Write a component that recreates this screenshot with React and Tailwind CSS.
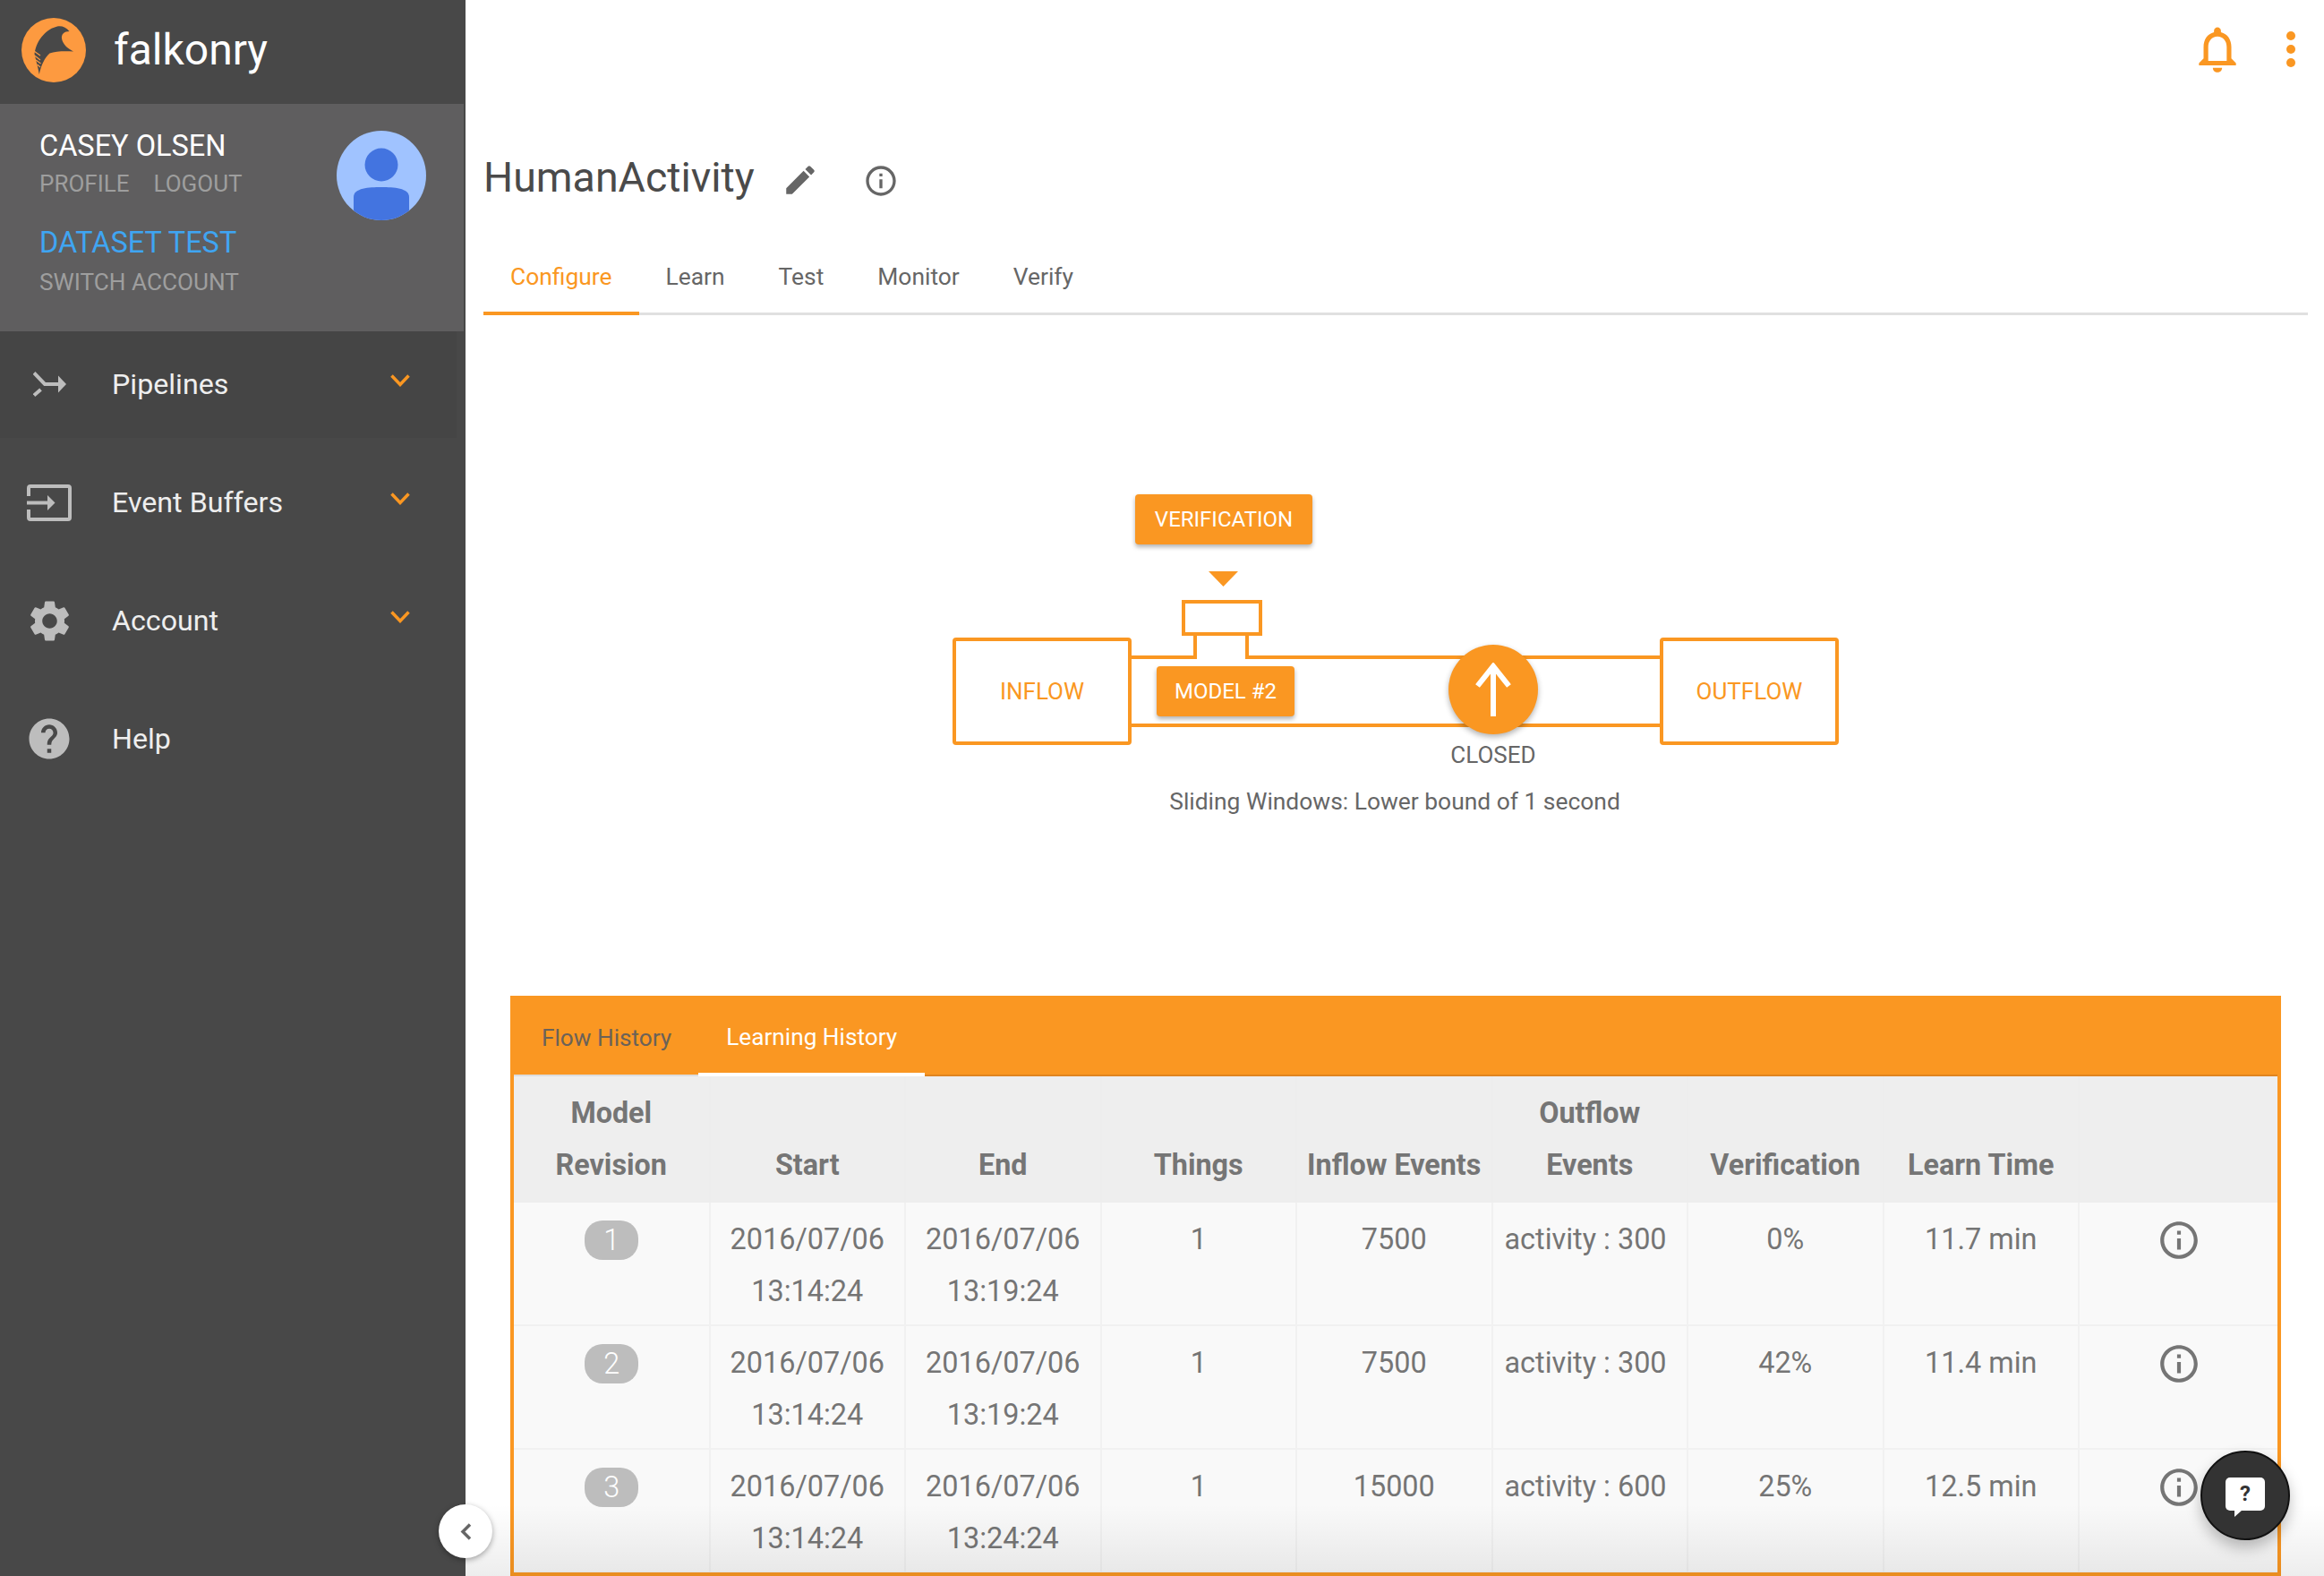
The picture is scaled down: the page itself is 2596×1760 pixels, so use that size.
import { MdEdit, MdHelp, MdInfoOutline, MdNotificationsNone, MdSettings } from "react-icons/md";

const navItems = [
  { label: "Pipelines", icon: PipelinesIcon, arrow: true, active: true },
  { label: "Event Buffers", icon: BufferIcon, arrow: true },
  { label: "Account", icon: () => <MdSettings size={55} />, arrow: true },
  { label: "Help", icon: () => <MdHelp size={54} /> }
];

const tabs = ["Configure", "Learn", "Test", "Monitor", "Verify"];

const rows = [
  { id: 1, start: "13:14:24", end: "13:19:24", inflow: "7500", outflow: "activity : 300", verify: "0%", time: "11.7 min" },
  { id: 2, start: "13:14:24", end: "13:19:24", inflow: "7500", outflow: "activity : 300", verify: "42%", time: "11.4 min" },
  { id: 3, start: "13:14:24", end: "13:24:24", inflow: "15000", outflow: "activity : 600", verify: "25%", time: "12.5 min" }
];

function PipelinesIcon() {
  return (
    <svg width="37" height="28" viewBox="0 0 37 28" fill="none" stroke="currentColor" strokeWidth="4">
      <path d="M1 1.5 L13 14 H29" />
      <path d="M1 26.5 L8.5 20" />
      <path d="M28 4.5 L37 14 L28 23.5 Z" fill="currentColor" stroke="none" />
    </svg>
  );
}

function BufferIcon() {
  return (
    <svg width="50" height="41" viewBox="0 0 50 41" fill="none" stroke="currentColor" strokeWidth="4">
      <path d="M2 13 V4 a2 2 0 0 1 2 -2 H46 a2 2 0 0 1 2 2 V37 a2 2 0 0 1 -2 2 H4 a2 2 0 0 1 -2 -2 V28" />
      <path d="M0 20.5 H24" />
      <path d="M23 12 L31.5 20.5 L23 29 Z" fill="currentColor" stroke="none" />
    </svg>
  );
}

function Logo() {
  return (
    <svg width="72" height="72" viewBox="0 0 72 72" className="shrink-0">
      <circle cx="36" cy="36" r="36" fill="#fd9a40" />
      <path
        d="M40 9.5 C45 8.5 50 10.5 53.5 15 C47.5 15 44.5 18 45 23 C46 29 51 34 58 37.5 C49 37 38 37 31.5 39.5 C26 44 22 53 19.8 63 C18.5 55 16 47 14.5 40 C16 31 19 25 24 19.5 C29 14 34 11 40 9.5 Z"
        fill="#484848"
      />
      <path d="M14 37 L21 42 M14.5 42 L21 47 M16 47 L21.5 51 M17.5 52 L21 55" stroke="#fd9a40" strokeWidth="1.2" />
    </svg>
  );
}

function Avatar() {
  return (
    <svg width="100" height="100" viewBox="0 0 100 100" className="shrink-0">
      <defs>
        <clipPath id="avatar-clip">
          <circle cx="50" cy="50" r="50" />
        </clipPath>
      </defs>
      <g clipPath="url(#avatar-clip)">
        <rect width="100" height="100" fill="#a0c3ff" />
        <circle cx="50" cy="38" r="18.5" fill="#4374e0" />
        <path d="M19 100 V74 C19 64 36 63 50 63 C64 63 81 64 81 74 V100 Z" fill="#4374e0" />
      </g>
    </svg>
  );
}

function Sidebar() {
  return (
    <aside className="w-[520px] shrink-0 bg-[#484848]">
      <div className="flex h-[116px] items-center pb-[4px] pl-[24px]">
        <Logo />
        <span className="ml-[31px] text-[48px] leading-none text-white">falkonry</span>
      </div>
      <div className="flex h-[254px] w-[518px] justify-between bg-[#5f5e5f] pl-[44px] pr-[42px] pt-[27px]">
        <div>
          <p className="h-[40px] text-[32.5px] leading-[40px] text-white">CASEY OLSEN</p>
          <p className="mt-[2px] flex h-[40px] gap-[27px] text-[26px] leading-[40px] text-[#9e9e9e]">
            <span>PROFILE</span>
            <span>LOGOUT</span>
          </p>
          <p className="mt-[26px] h-[40px] text-[32.5px] leading-[40px] text-[#3fa5f2]">DATASET TEST</p>
          <p className="mt-[4px] h-[40px] text-[26.2px] leading-[40px] text-[#9e9e9e]">SWITCH ACCOUNT</p>
        </div>
        <div className="pt-[3px]">
          <Avatar />
        </div>
      </div>
      <nav>
        {navItems.map((item) => (
          <div
            key={item.label}
            className={`flex w-[510px] items-center ${item.active ? "mb-[6px] h-[119px] bg-[#454545] pb-[1px]" : "h-[132px]"}`}
          >
            <span className="flex w-[110px] shrink-0 items-center justify-center text-[#bdbdbd]">
              <item.icon />
            </span>
            <span className="ml-[15px] flex-1 text-[32.2px] leading-none text-[#eeeeee]">{item.label}</span>
            {item.arrow && (
              <svg width="22" height="14" viewBox="0 0 22 14" fill="none" stroke="#fa9722" strokeWidth="3.5" className="mb-[8px] mr-[52px]">
                <path d="M1.5 1.5 L11 11.5 L20.5 1.5" />
              </svg>
            )}
          </div>
        ))}
      </nav>
    </aside>
  );
}

function Diagram() {
  const btn = "absolute flex items-center justify-center rounded-[4px] bg-[#fa9722] text-[24px] text-white shadow-[0_3px_5px_rgba(0,0,0,0.3)]";
  const node = "absolute top-[360px] flex h-[120px] w-[200px] items-center justify-center rounded-[4px] border-4 border-[#fa9722] bg-white text-[26px] text-[#fa9722]";
  return (
    <div className="relative h-[760px]">
      <div className={`${btn} left-[728px] top-[200px] h-[56px] w-[198px]`}>VERIFICATION</div>
      <svg width="33" height="17" viewBox="0 0 33 17" className="absolute left-[810px] top-[286px]">
        <path d="M0 0 H33 L16.5 17 Z" fill="#fa9722" />
      </svg>
      <div className="absolute left-[780px] top-[318px] h-[40px] w-[90px] border-4 border-[#fa9722]" />
      <svg width="590" height="112" viewBox="0 0 590 112" fill="none" stroke="#fa9722" strokeWidth="4" className="absolute left-[724px] top-[350px]">
        <path d="M0 32 H71 V8 M129 8 V32 H590 M0 108 H590" />
      </svg>
      <div className={`${node} left-[524px]`}>INFLOW</div>
      <div className={`${node} left-[1314px]`}>OUTFLOW</div>
      <div className={`${btn} left-[752px] top-[392px] h-[56px] w-[154px]`}>MODEL #2</div>
      <div className="absolute left-[1078px] top-[368px] flex h-[100px] w-[100px] items-center justify-center rounded-full bg-[#fa9722] shadow-[0_3px_6px_rgba(0,0,0,0.3)]">
        <svg width="40" height="60" viewBox="0 0 40 60" fill="none" stroke="#ffffff" strokeWidth="6">
          <path d="M20 60 V4 M2.5 26 L20 4 L37.5 26" />
        </svg>
      </div>
      <div className="absolute left-[1028px] top-[471px] w-[200px] text-center text-[26px] leading-[40px] text-[#666666]">CLOSED</div>
      <div className="absolute left-[518px] top-[523px] w-[1000px] text-center text-[26.4px] leading-[40px] text-[#666666]">Sliding Windows: Lower bound of 1 second</div>
    </div>
  );
}

function HistoryTable() {
  const th = "border-x-2 border-[#ededed] px-[8px] pb-[13px] pt-[12px] align-bottom text-[32.3px] font-bold leading-[58px] text-[#757575] first:border-l-0 last:border-r-0";
  const td = "border-x-2 border-b-2 border-[#f1f1f1] px-[8px] pb-[8px] pt-[12px] align-top text-[32.4px] leading-[58px] text-[#757575] first:border-l-0 last:border-r-0";
  return (
    <section className="mx-[30px] h-[648px] overflow-hidden border-x-4 border-b-4 border-[#fa9722]">
      <div className="-mx-[4px] flex h-[90px] items-stretch border-b-2 border-[#e08420] bg-[#fa9722] pl-[4px] text-[26.2px]">
        <div className="-mb-[2px] flex items-center border-b-2 border-[#dddddd] pl-[31px] pr-[30px] pt-[8px] text-[#6b6258]">Flow History</div>
        <div className="-mb-[2px] flex items-center border-b-4 border-white px-[31px] pt-[8px] text-white">Learning History</div>
      </div>
      <table className="w-full table-fixed border-collapse bg-[#f9f9f9]">
        <colgroup>
          <col className="w-[218.5px]" />
          <col className="w-[218.5px]" />
          <col className="w-[218.5px]" />
          <col className="w-[218.5px]" />
          <col className="w-[218.5px]" />
          <col className="w-[218.5px]" />
          <col className="w-[218.5px]" />
          <col className="w-[218.5px]" />
          <col />
        </colgroup>
        <thead className="bg-[#eeeeee]">
          <tr>
            <th className={th}>Model Revision</th>
            <th className={th}>Start</th>
            <th className={th}>End</th>
            <th className={th}>Things</th>
            <th className={th}>Inflow Events</th>
            <th className={th}>Outflow Events</th>
            <th className={th}>Verification</th>
            <th className={th}>Learn Time</th>
            <th className={th}></th>
          </tr>
        </thead>
        <tbody>
          {rows.map((row) => (
            <tr key={row.id} className="text-center">
              <td className={td}>
                <span className="ml-[1px] mt-[8px] inline-flex h-[44px] w-[60px] items-center justify-center rounded-[20px] bg-[#bdbdbd] font-light text-white">{row.id}</span>
              </td>
              <td className={td}>2016/07/06 {row.start}</td>
              <td className={td}>2016/07/06 {row.end}</td>
              <td className={td}>1</td>
              <td className={td}>{row.inflow}</td>
              <td className={`${td} pl-[13px] text-left`}>{row.outflow}</td>
              <td className={td}>{row.verify}</td>
              <td className={td}>{row.time}</td>
              <td className={td}>
                <span className="flex h-[58px] items-center justify-center pt-[2px]">
                  <MdInfoOutline size={50} />
                </span>
              </td>
            </tr>
          ))}
        </tbody>
      </table>
    </section>
  );
}

export default function App() {
  return (
    <div className="relative flex h-[1760px] w-[2596px] overflow-hidden bg-white font-['Roboto',sans-serif]">
      <Sidebar />
      <main className="flex-1 pl-[20px] pr-[18px]">
        <header className="flex h-[110px] items-center justify-end text-[#fa9722]">
          <MdNotificationsNone size={62} />
          <div className="ml-[46px] mr-[14px] flex flex-col gap-[5px]">
            <span className="h-[10px] w-[10px] rounded-full bg-[#fa9722]" />
            <span className="h-[10px] w-[10px] rounded-full bg-[#fa9722]" />
            <span className="h-[10px] w-[10px] rounded-full bg-[#fa9722]" />
          </div>
        </header>
        <div className="flex h-[160px] items-start pt-[60px]">
          <h1 className="text-[46.5px] leading-[56px] text-[#4a4a4a]">HumanActivity</h1>
          <span className="ml-[30px] mt-[10px] text-[#666666]"><MdEdit size={42} /></span>
          <span className="ml-[49px] mt-[12px] text-[#666666]"><MdInfoOutline size={40} /></span>
        </div>
        <div className="flex h-[82px] border-b-[3px] border-[#e0e0e0]">
          {tabs.map((tab, i) => (
            <div
              key={tab}
              className={`flex items-center px-[30px] pt-[1px] text-[26.4px] ${i === 0 ? "-mb-[3px] border-b-4 border-[#fa9722] text-[#fa9722]" : "text-[#666666]"}`}
            >
              {tab}
            </div>
          ))}
        </div>
        <Diagram />
        <HistoryTable />
      </main>
      <div className="pointer-events-none absolute bottom-0 left-[520px] right-0 h-[80px] bg-linear-to-b from-transparent to-black/[0.07]" />
      <button className="absolute left-[490px] top-[1680px] flex h-[60px] w-[60px] items-center justify-center rounded-full bg-white shadow-[0_2px_6px_rgba(0,0,0,0.35)]">
        <svg width="13" height="19" viewBox="0 0 13 19" fill="none" stroke="#666666" strokeWidth="3.5">
          <path d="M11 1.5 L3 9.5 L11 17.5" />
        </svg>
      </button>
      <button className="absolute left-[2458px] top-[1620px] flex h-[100px] w-[100px] items-center justify-center rounded-full border-2 border-[#111111] bg-[#333333] shadow-[0_8px_16px_rgba(0,0,0,0.25)]">
        <span className="relative mb-[4px] flex h-[37px] w-[44px] items-center justify-center rounded-[5px] bg-white text-[24px] font-bold leading-none text-[#333333]">
          ?
          <span className="absolute left-[10px] top-[36px] h-0 w-0 border-r-[9px] border-t-[8px] border-r-transparent border-t-white" />
        </span>
      </button>
    </div>
  );
}
